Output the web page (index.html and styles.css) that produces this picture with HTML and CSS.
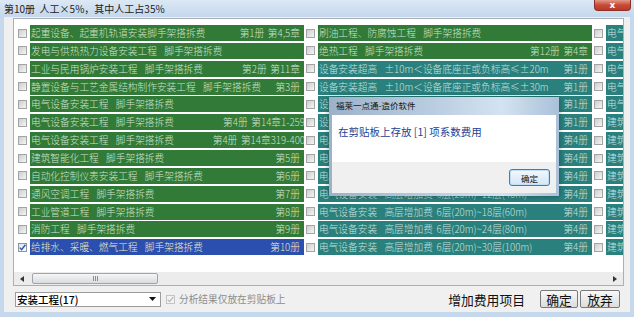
FILE: index.html
```html
<!DOCTYPE html>
<html lang="zh-CN">
<head>
<meta charset="UTF-8" />
<meta name="viewport" content="width=device-width, initial-scale=1" />
<title>增加费用项目</title>
<link rel="stylesheet" href="styles.css">
</head>
<body>

<div class="window">
  <div class="titlebar">
    <span class="title">第10册  人工×5%，其中人工占35%</span>
    <span class="close">x</span>
  </div>

  <div class="client">
    <div class="listbox">
      <div class="columns">
        <div class="col">
          <div class="item"><span class="cb"></span><div class="bar green"><span>起重设备、起重机轨道安装脚手架搭拆费</span><span>第1册 第4,5章</span></div></div>
          <div class="item"><span class="cb"></span><div class="bar green"><span>发电与供热热力设备安装工程  脚手架搭拆费</span><span></span></div></div>
          <div class="item"><span class="cb"></span><div class="bar green"><span>工业与民用锅炉安装工程  脚手架搭拆费</span><span>第2册 第11章</span></div></div>
          <div class="item"><span class="cb"></span><div class="bar green"><span>静置设备与工艺金属结构制作安装工程  脚手架搭拆费</span><span>第3册</span></div></div>
          <div class="item"><span class="cb"></span><div class="bar green"><span>电气设备安装工程  脚手架搭拆费</span><span></span></div></div>
          <div class="item"><span class="cb"></span><div class="bar green"><span>电气设备安装工程  脚手架搭拆费</span><span class="long">第4册 第14章1-259</span></div></div>
          <div class="item"><span class="cb"></span><div class="bar green"><span>电气设备安装工程  脚手架搭拆费</span><span class="long">第4册 第14章319-400</span></div></div>
          <div class="item"><span class="cb"></span><div class="bar green"><span>建筑智能化工程  脚手架搭拆费</span><span>第5册</span></div></div>
          <div class="item"><span class="cb"></span><div class="bar green"><span>自动化控制仪表安装工程  脚手架搭拆费</span><span>第6册</span></div></div>
          <div class="item"><span class="cb"></span><div class="bar green"><span>通风空调工程  脚手架搭拆费</span><span>第7册</span></div></div>
          <div class="item"><span class="cb"></span><div class="bar green"><span>工业管道工程  脚手架搭拆费</span><span>第8册</span></div></div>
          <div class="item"><span class="cb"></span><div class="bar green"><span>消防工程  脚手架搭拆费</span><span>第9册</span></div></div>
          <div class="item"><span class="cb checked"><svg viewBox="0 0 9 9" width="9" height="9"><path d="M1.8 4.6 L3.6 6.6 L7.4 1.8" fill="none" stroke="#2c55b8" stroke-width="1.4"/></svg></span><div class="bar sel"><span>给排水、采暖、燃气工程  脚手架搭拆费</span><span>第10册</span></div></div>
        </div>

        <div class="col">
          <div class="item"><span class="cb"></span><div class="bar green"><span>刷油工程、防腐蚀工程  脚手架搭拆费</span><span></span></div></div>
          <div class="item"><span class="cb"></span><div class="bar green"><span>绝热工程  脚手架搭拆费</span><span>第12册 第4章</span></div></div>
          <div class="item"><span class="cb"></span><div class="bar teal"><span>设备安装超高  ±10m＜设备底座正或负标高≤±20m</span><span>第1册</span></div></div>
          <div class="item"><span class="cb"></span><div class="bar teal"><span>设备安装超高  ±10m＜设备底座正或负标高≤±30m</span><span>第1册</span></div></div>
          <div class="item"><span class="cb"></span><div class="bar teal"><span>设备安装超高  ±10m＜设备底座正或负标高≤±40m</span><span>第1册</span></div></div>
          <div class="item"><span class="cb"></span><div class="bar teal"><span>设备安装超高  设备底座正或负标高＞±40m</span><span>第1册</span></div></div>
          <div class="item"><span class="cb"></span><div class="bar teal"><span>电气设备安装  高层增加费 9层(30m)以下</span><span>第4册</span></div></div>
          <div class="item"><span class="cb"></span><div class="bar teal"><span>电气设备安装  高层增加费 12层(40m)以下</span><span>第4册</span></div></div>
          <div class="item"><span class="cb"></span><div class="bar teal"><span>电气设备安装  高层增加费 6层(20m)~9层(30m)</span><span>第4册</span></div></div>
          <div class="item"><span class="cb"></span><div class="bar teal"><span>电气设备安装  高层增加费 6层(20m)~12层(40m)</span><span>第4册</span></div></div>
          <div class="item"><span class="cb"></span><div class="bar teal"><span>电气设备安装  高层增加费 6层(20m)~18层(60m)</span><span>第4册</span></div></div>
          <div class="item"><span class="cb"></span><div class="bar teal"><span>电气设备安装  高层增加费 6层(20m)~24层(80m)</span><span>第4册</span></div></div>
          <div class="item"><span class="cb"></span><div class="bar teal"><span>电气设备安装  高层增加费 6层(20m)~30层(100m)</span><span>第4册</span></div></div>
        </div>

        <div class="col">
          <div class="item"><span class="cb"></span><div class="bar teal"><span>电气设备安装  高层增加费</span><span></span></div></div>
          <div class="item"><span class="cb"></span><div class="bar teal"><span>电气设备安装  高层增加费</span><span></span></div></div>
          <div class="item"><span class="cb"></span><div class="bar teal"><span>电气设备安装  高层增加费</span><span></span></div></div>
          <div class="item"><span class="cb"></span><div class="bar teal"><span>电气设备安装  高层增加费</span><span></span></div></div>
          <div class="item"><span class="cb"></span><div class="bar teal"><span>电气设备安装  高层增加费</span><span></span></div></div>
          <div class="item"><span class="cb"></span><div class="bar teal"><span>建筑智能化工程  高层增加费</span><span></span></div></div>
          <div class="item"><span class="cb"></span><div class="bar teal"><span>建筑智能化工程  高层增加费</span><span></span></div></div>
          <div class="item"><span class="cb"></span><div class="bar teal"><span>建筑智能化工程  高层增加费</span><span></span></div></div>
          <div class="item"><span class="cb"></span><div class="bar teal"><span>建筑智能化工程  高层增加费</span><span></span></div></div>
          <div class="item"><span class="cb"></span><div class="bar teal"><span>建筑智能化工程  高层增加费</span><span></span></div></div>
          <div class="item"><span class="cb"></span><div class="bar teal"><span>建筑智能化工程  高层增加费</span><span></span></div></div>
          <div class="item"><span class="cb"></span><div class="bar teal"><span>建筑智能化工程  高层增加费</span><span></span></div></div>
          <div class="item"><span class="cb"></span><div class="bar teal"><span>建筑智能化工程  高层增加费</span><span></span></div></div>
        </div>
      </div>

      <div class="hscroll">
        <span class="arrow"><svg viewBox="0 0 4 6" width="4" height="6"><path d="M4 0 L0 3 L4 6 Z" fill="#333"/></svg></span>
        <span class="thumb"><span class="grip"></span></span>
        <span class="track"></span>
        <span class="arrow"><svg viewBox="0 0 4 6" width="4" height="6"><path d="M0 0 L4 3 L0 6 Z" fill="#333"/></svg></span>
      </div>
    </div>

    <div class="bottom">
      <div class="combo">
        <span>安装工程(17)</span>
        <svg viewBox="0 0 7 4" width="7" height="4"><path d="M0 0 L7 0 L3.5 4 Z" fill="#111"/></svg>
      </div>
      <span class="cb disabled"><svg viewBox="0 0 9 9" width="9" height="9"><path d="M1.8 4.6 L3.6 6.6 L7.4 1.8" fill="none" stroke="#b9b9b9" stroke-width="1.3"/></svg></span>
      <span class="only-clip">分析结果仅放在剪贴板上</span>
      <span class="caption">增加费用项目</span>
      <button class="btn ok">确定</button>
      <button class="btn">放弃</button>
    </div>
  </div>

  <div class="dialog">
    <div class="dlg-title">福莱一点通-造价软件</div>
    <div class="dlg-body">在剪贴板上存放 [1] 项系数费用</div>
    <div class="dlg-foot"><button class="dlg-btn">确定</button></div>
  </div>
</div>

</body>
</html>
```

FILE: styles.css
```css
body {
  margin: 0;
  font-family: "Noto Sans CJK SC", "Noto Sans", sans-serif;
}

.window {
  position: relative;
  width: 634px;
  height: 317px;
  background: #c6d8eb;
  display: flex;
  flex-direction: column;
  overflow: hidden;
}

/* title bar */
.titlebar {
  height: 17px;
  flex: none;
  display: flex;
  justify-content: space-between;
  align-items: flex-start;
  background: linear-gradient(#dce8f5, #c4d7ec);
}
.title {
  padding-left: 4px;
  font-size: 10px;
  line-height: 17px;
  white-space: pre;
  color: #1b1b1b;
}
.close {
  width: 37px;
  height: 11px;
  margin-right: 3px;
  box-sizing: border-box;
  border: 1px solid #8a3226;
  border-top: none;
  border-radius: 0 0 4px 4px;
  background: linear-gradient(#e39a8b, #c94a36 50%, #b8392a);
  color: #fff;
  font: bold 9px/10px "DejaVu Sans", sans-serif;
  text-align: center;
}

/* client area */
.client {
  flex: 1;
  margin: 0 4px 5px;
  padding: 1px 6px 0 9px;
  background: #f0f0f0;
  display: flex;
  flex-direction: column;
}
.listbox {
  height: 268px;
  flex: none;
  box-sizing: border-box;
  border: 1px solid #a9b0b8;
  background: #fff;
  display: flex;
  flex-direction: column;
}
.columns {
  flex: 1;
  display: flex;
  padding: 6px 1px 0 4px;
  overflow: hidden;
}
.col {
  flex: none;
  width: 288px;
  display: flex;
  flex-direction: column;
  gap: 1.86px;
}
.item {
  height: 16px;
  display: flex;
  align-items: center;
}
.cb {
  flex: none;
  width: 9px;
  height: 9px;
  margin-right: 3px;
  box-sizing: border-box;
  border: 1px solid #a4a4a4;
  background: linear-gradient(135deg, #cdcdcd, #f5f5f5);
  display: flex;
}
.cb.checked {
  background: linear-gradient(135deg, #dfe6ee, #fafafa);
  border-color: #8d96a0;
}
.cb svg {
  margin: -1px;
}
.bar {
  flex: none;
  width: 274px;
  height: 16px;
  box-sizing: border-box;
  padding: 0 4px 0 1px;
  display: flex;
  justify-content: space-between;
  align-items: center;
  overflow: hidden;
  white-space: pre;
  font-size: 9.7px;
  font-weight: 300;
  word-spacing: 1.5px;
}
.bar .long {
  margin-right: -5px;
}
.green {
  background: #317a37;
  color: #cfe2cb;
}
.teal {
  background: #2a807d;
  color: #cbe1df;
}
.sel {
  background: #2a4fae;
  color: #efeac2;
}

/* horizontal scroll bar */
.hscroll {
  height: 13px;
  flex: none;
  display: flex;
  align-items: center;
  background: #ececec;
}
.arrow {
  width: 16px;
  height: 13px;
  display: flex;
  align-items: center;
  justify-content: center;
}
.thumb {
  width: 126px;
  height: 11px;
  margin-left: 2px;
  box-sizing: border-box;
  border: 1px solid #9ea5ad;
  border-radius: 2px;
  background: linear-gradient(#f6f6f6, #d9dcdf);
  display: flex;
  align-items: center;
  justify-content: center;
}
.grip {
  width: 5px;
  height: 5px;
  background: repeating-linear-gradient(to right, #8a8f95 0 1px, transparent 1px 2px);
}
.track {
  flex: 1;
}

/* bottom bar */
.bottom {
  flex: 1;
  display: flex;
  align-items: center;
  padding-right: 4px;
}
.combo {
  width: 146px;
  height: 15px;
  margin-left: 2px;
  box-sizing: border-box;
  border: 1px solid #9c9c9c;
  background: #fff;
  padding: 0 4px 0 1px;
  display: flex;
  justify-content: space-between;
  align-items: center;
  font-size: 10.5px;
  font-weight: 500;
  color: #000;
}
.cb.disabled {
  margin: 0 4px 0 5px;
  background: #f3f3f3;
  border-color: #c4c4c4;
}
.only-clip {
  font-size: 9.7px;
  color: #8c8c8c;
}
.caption {
  margin-left: auto;
  margin-right: 13px;
  font-size: 12.8px;
  color: #111;
}
.btn {
  width: 40px;
  height: 18px;
  margin: 0 0 0 2px;
  padding: 0;
  border: 1px solid #7a7a7a;
  border-radius: 2px;
  background: linear-gradient(#f8f8f8, #dcdcdc);
  font-family: "Noto Sans CJK SC", sans-serif;
  font-size: 12.8px;
  line-height: 15px;
  color: #111;
}
.btn.ok {
  width: 38px;
}

/* message box */
.dialog {
  position: absolute;
  left: 329px;
  top: 97px;
  width: 230px;
  box-sizing: border-box;
  padding: 0 3px 3px;
  background: linear-gradient(to right, #9db2c9, #b9cde1 45%, #d4e3f1 75%, #a9c1d9);
  box-shadow: 0 0 6px rgba(0, 0, 0, 0.35);
}
.dlg-title {
  height: 18px;
  padding-left: 4px;
  font-size: 8.5px;
  line-height: 16px;
  color: #111;
}
.dlg-body {
  height: 47px;
  box-sizing: border-box;
  padding: 9px 0 0 6px;
  background: #fff;
  font-size: 10.5px;
  color: #1d3f93;
}
.dlg-foot {
  height: 31px;
  padding-right: 6px;
  background: #f0f0f0;
  display: flex;
  justify-content: flex-end;
  align-items: center;
}
.dlg-btn {
  width: 41px;
  height: 17px;
  padding: 0;
  border: 1px solid #3c7fb1;
  border-radius: 3px;
  background: linear-gradient(#f2f8fd, #d4e6f4);
  box-shadow: inset 0 0 0 1px #bfe0f7;
  font-family: "Noto Sans CJK SC", sans-serif;
  font-size: 8.5px;
  color: #111;
}
```
